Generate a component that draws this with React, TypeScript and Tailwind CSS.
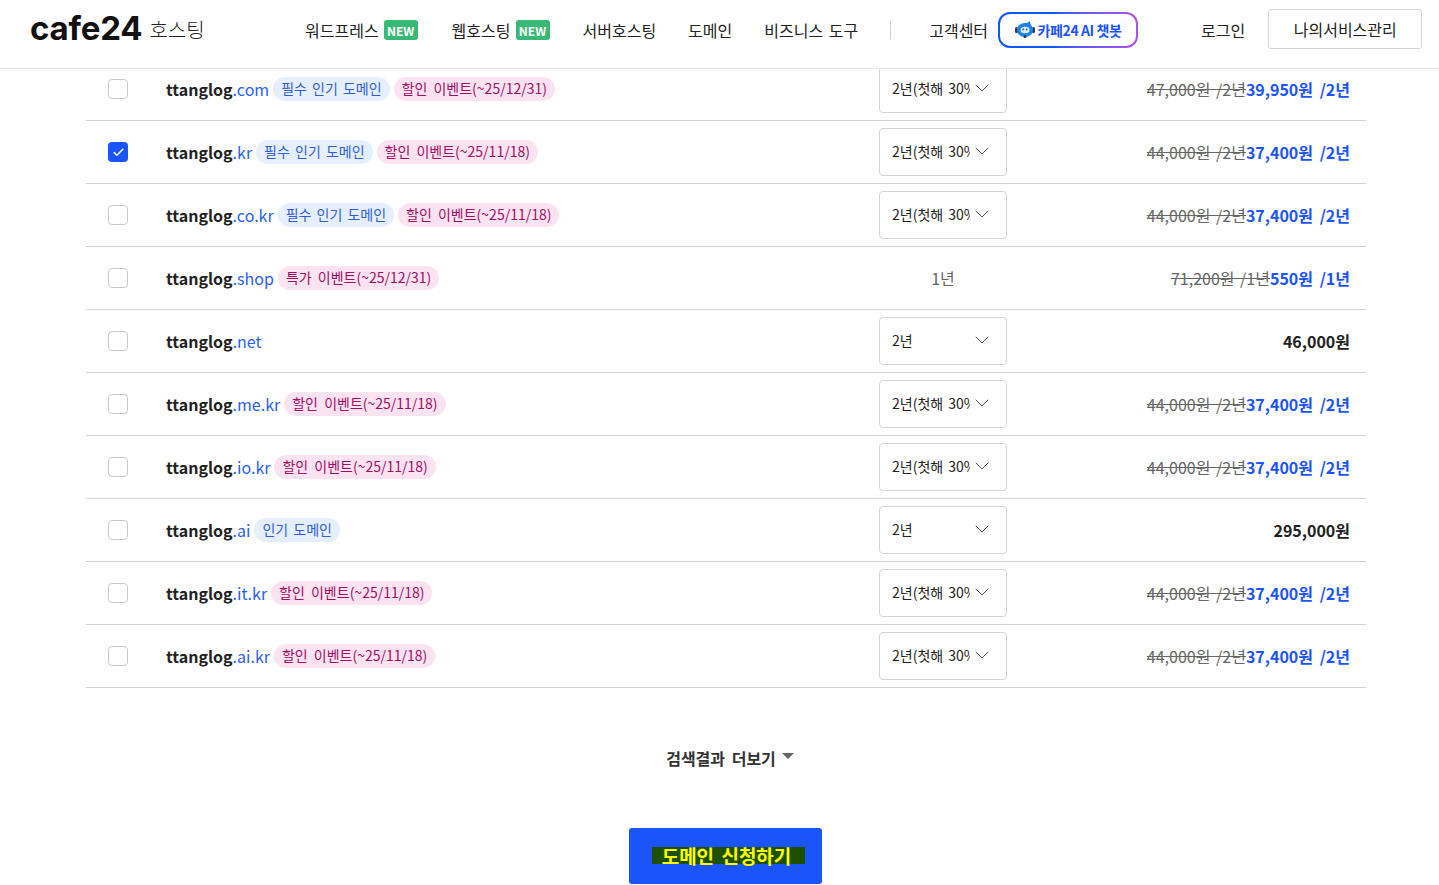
import { Check, ChevronDown } from "lucide-react";

interface Row {
  tld: string;
  tags: { label: string; kind: "blue" | "pink" }[];
  period: string;
  oldPrice?: string;
  price: string;
  checked?: boolean;
}

const hot = { label: "필수 인기 도메인", kind: "blue" as const };
const sale = (d: string) => ({ label: `할인 이벤트(~${d})`, kind: "pink" as const });
const disc = "2년(첫해 30% 할인)";

const rows: Row[] = [
  { tld: ".com", tags: [hot, sale("25/12/31")], period: disc, oldPrice: "47,000원 /2년", price: "39,950원 /2년" },
  { tld: ".kr", tags: [hot, sale("25/11/18")], period: disc, oldPrice: "44,000원 /2년", price: "37,400원 /2년", checked: true },
  { tld: ".co.kr", tags: [hot, sale("25/11/18")], period: disc, oldPrice: "44,000원 /2년", price: "37,400원 /2년" },
  { tld: ".shop", tags: [{ label: "특가 이벤트(~25/12/31)", kind: "pink" }], period: "1년", oldPrice: "71,200원 /1년", price: "550원 /1년" },
  { tld: ".net", tags: [], period: "2년", price: "46,000원" },
  { tld: ".me.kr", tags: [sale("25/11/18")], period: disc, oldPrice: "44,000원 /2년", price: "37,400원 /2년" },
  { tld: ".io.kr", tags: [sale("25/11/18")], period: disc, oldPrice: "44,000원 /2년", price: "37,400원 /2년" },
  { tld: ".ai", tags: [{ label: "인기 도메인", kind: "blue" }], period: "2년", price: "295,000원" },
  { tld: ".it.kr", tags: [sale("25/11/18")], period: disc, oldPrice: "44,000원 /2년", price: "37,400원 /2년" },
  { tld: ".ai.kr", tags: [sale("25/11/18")], period: disc, oldPrice: "44,000원 /2년", price: "37,400원 /2년" },
];

function NewBadge() {
  return (
    <span className="ml-[5px] flex h-5 w-[34px] items-center justify-center rounded-[3px] bg-[#38b976] pt-px text-[12px] font-bold text-white">
      NEW
    </span>
  );
}

function BotIcon() {
  return (
    <svg width="20" height="18" viewBox="0 0 20 18" className="shrink-0">
      <rect x="0" y="6" width="3" height="6" rx="1.5" fill="#2a3550" />
      <rect x="17" y="6" width="3" height="6" rx="1.5" fill="#2a3550" />
      <path d="M10 2c2 0 3.500-.5 5-2 0 2 .5 3 1.500 4.500C17.500 6 18 7.500 18 9c0 4-3.500 7-8 7s-8-3-8-7 3.500-7 8-7z" fill="#1c84ea" />
      <ellipse cx="10" cy="9" rx="4.500" ry="3.200" fill="#dff1ff" />
      <circle cx="8.300" cy="8.500" r=".9" fill="#1c5bb0" />
      <circle cx="11.700" cy="8.500" r=".9" fill="#1c5bb0" />
      <circle cx="10" cy="15.500" r="1.500" fill="#2a3550" />
    </svg>
  );
}

function Header() {
  return (
    <header className="relative z-10 flex h-[69px] items-center border-b border-[#e8e8e8] bg-white pb-2 text-[16px] text-[#222]">
      <div className="ml-[30px] flex w-[275px] items-center">
        <span className="-mt-[4px] font-['Inter',sans-serif] text-[33px] leading-none font-bold tracking-[-0.2px] text-[#111]">cafe24</span>
        <span className="ml-[7px] text-[20px] leading-none font-light">호스팅</span>
      </div>
      <nav className="flex items-center">
        <span>워드프레스</span>
        <NewBadge />
        <span className="ml-[34px]">웹호스팅</span>
        <NewBadge />
        <span className="ml-[33px]">서버호스팅</span>
        <span className="ml-8">도메인</span>
        <span className="ml-8 [word-spacing:2px]">비즈니스 도구</span>
        <span className="ml-8 h-[18px] w-px bg-[#cfcfcf]" />
        <span className="ml-[38px]">고객센터</span>
      </nav>
      <div className="ml-[10px] h-9 w-[140px] rounded-[12px] bg-gradient-to-r from-[#0e57ff] from-40% to-[#b04fe8] p-[2px]">
        <div className="flex h-full items-center justify-center gap-[3px] rounded-[10px] bg-white text-[14px] font-bold tracking-[-0.4px] text-[#1b54fb]">
          <BotIcon />
          <span>카페24 AI 챗봇</span>
        </div>
      </div>
      <span className="ml-[63px]">로그인</span>
      <div className="ml-[23px] -mt-[2px] flex h-10 w-[154px] items-center justify-center rounded-[3px] border border-[#d5d5d5]">나의서비스관리</div>
    </header>
  );
}

function PeriodCell({ period }: { period: string }) {
  if (period === "1년") {
    return <div className="w-32 text-center text-[16px] text-[#666]">1년</div>;
  }
  return (
    <div className="flex h-12 w-32 items-center rounded-[4px] border border-[#d5d5d5] bg-white pr-3 pl-3">
      <span className="-mt-[1px] w-[78px] overflow-hidden text-[14px] whitespace-nowrap text-[#222] [word-spacing:2px]">{period}</span>
      <ChevronDown size={24} strokeWidth={1} className="-mt-[2px] ml-auto text-[#555]" />
    </div>
  );
}

function DomainRow({ row }: { row: Row }) {
  return (
    <div className="flex h-[63px] items-center border-b border-[#d2d2d2] pr-4">
      <div className="flex w-20 justify-end pr-[38px] pl-[22px]">
        {row.checked ? (
          <span className="flex h-5 w-5 items-center justify-center rounded-[4px] bg-[#1b54fb] text-white">
            <Check size={13} strokeWidth={3} />
          </span>
        ) : (
          <span className="h-5 w-5 shrink-0 rounded-[4px] border border-[#c9c9c9] bg-white" />
        )}
      </div>
      <div className="flex w-[713px] items-center">
        <span className="text-[16px]">
          <span className="font-bold text-[#222]">ttanglog</span>
          <span className="text-[#2b5ff0]">{row.tld}</span>
        </span>
        {row.tags.map((t) => (
          <span
            key={t.label}
            className={
              t.kind === "blue"
                ? "ml-[4px] -mt-[1px] flex h-6 items-center rounded-full bg-[#e6efff] px-2 text-[14px] text-[#2f5fd8] [word-spacing:2px]"
                : "ml-[4px] -mt-[1px] flex h-6 items-center rounded-full bg-[#fce3f2] px-2 text-[14px] text-[#a30d63] [word-spacing:3px]"
            }
          >
            {t.label}
          </span>
        ))}
      </div>
      <PeriodCell period={row.period} />
      <div className="flex-1 text-right text-[16px] whitespace-nowrap [word-spacing:2px]">
        {row.oldPrice ? (
          <>
            <span className="text-[#666] line-through">{row.oldPrice}</span>
            <span className="font-bold text-[#1b54fb] [word-spacing:3px]">{row.price}</span>
          </>
        ) : (
          <span className="font-bold text-[#222]">{row.price}</span>
        )}
      </div>
    </div>
  );
}

export default function App() {
  return (
    <div className="h-[885px] w-full overflow-hidden bg-white font-['Noto_Sans_CJK_KR','Noto_Sans',sans-serif]">
      <Header />
      <main className="-mt-[11px] flex flex-col items-center pl-[13px]">
        <div className="w-[1280px]">
          {rows.map((r) => (
            <DomainRow key={r.tld} row={r} />
          ))}
        </div>
        <div className="mt-[58px] ml-2 flex h-6 items-center text-[16px] font-bold text-[#333] [word-spacing:3px]">
          <span>검색결과 더보기</span>
          <span className="ml-[6px] -mt-[5px] h-0 w-0 border-x-[6px] border-t-[6px] border-x-transparent border-t-[#666]" />
        </div>
        <div className="mt-[58px] mr-px flex h-14 w-[193px] items-center justify-center rounded-[3px] bg-[#1b54fb]">
          <span className="-mt-[2px] ml-[6px] bg-[#1d5000] pr-[14px] pl-[10px] text-[19px] leading-[17px] font-bold text-[#ffff00] [word-spacing:3px]">도메인 신청하기</span>
        </div>
      </main>
    </div>
  );
}
